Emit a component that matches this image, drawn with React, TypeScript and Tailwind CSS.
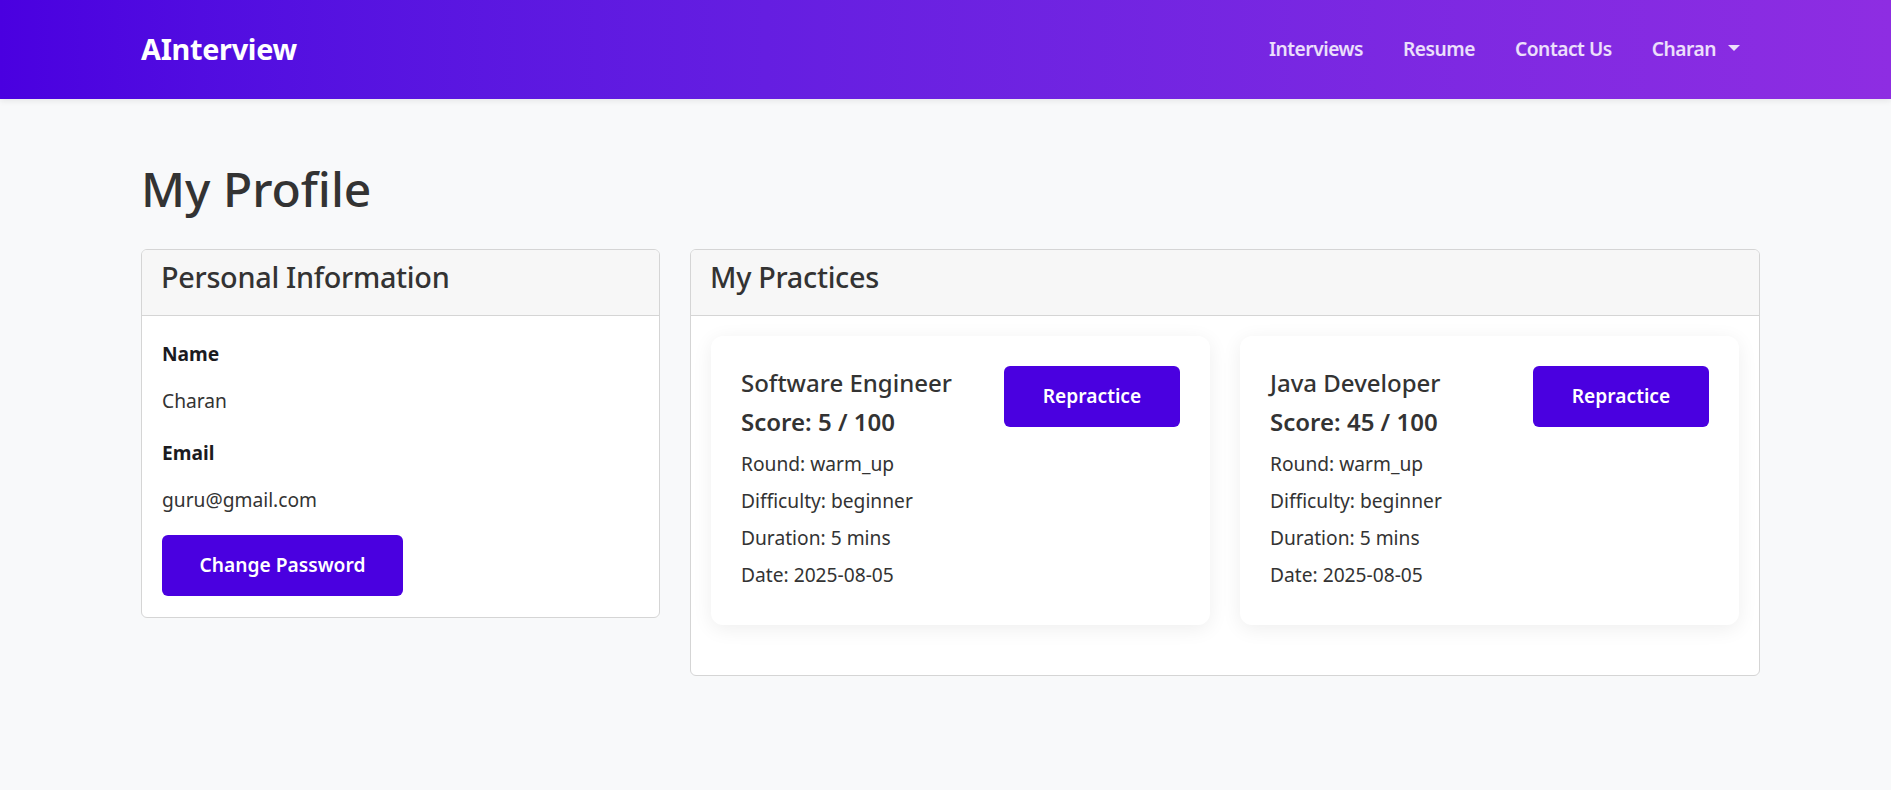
const practices = [
  { id: 1, role: "Software Engineer", score: 5, round: "warm_up", difficulty: "beginner", duration: 5, date: "2025-08-05" },
  { id: 2, role: "Java Developer", score: 45, round: "warm_up", difficulty: "beginner", duration: 5, date: "2025-08-05" },
];

function Navbar() {
  return (
    <nav className="h-[99px] bg-gradient-to-r from-[#4a00e0] to-[#8e2de2] shadow-[0_2px_6px_rgba(0,0,0,0.08)]">
      <div className="flex h-full items-center pl-[141px] pr-[131px]">
        <a href="#" className="text-[28.8px] font-bold leading-none tracking-[-0.01em] text-white">
          AInterview
        </a>
        <ul className="ml-auto flex items-center text-[19.2px] font-semibold tracking-[-0.025em] text-white/85">
          <li><a href="#" className="block px-[20px]">Interviews</a></li>
          <li><a href="#" className="block px-[20px]">Resume</a></li>
          <li><a href="#" className="block px-[20px]">Contact Us</a></li>
          <li>
            <a href="#" className="flex items-center px-[20px]">
              Charan
              {/* dropdown caret */}
              <span className="mb-[3px] ml-[12px] inline-block h-0 w-0 border-x-[6px] border-t-[6px] border-x-transparent border-t-white/85" />
            </a>
          </li>
        </ul>
      </div>
    </nav>
  );
}

function CardHeader({ title }: { title: string }) {
  return (
    <div className="border-b border-[#d5d5d5] bg-[#f7f7f7] px-[19px] pt-[10px] pb-[21px]">
      <h4 className="text-[28.8px] font-medium leading-[34.5px] tracking-[-0.01em] text-[#333]">{title}</h4>
    </div>
  );
}

function PracticeCard({ p }: { p: (typeof practices)[number] }) {
  return (
    <div className="mb-[30px] flex justify-between rounded-[12px] bg-white px-[30px] pt-[30px] pb-[28px] shadow-[0_4px_20px_rgba(0,0,0,0.07)]">
      <div className="text-[#333]">
        <h5 className="mt-[2px] mb-[10px] text-[24px] font-medium leading-[29px]">{p.role}</h5>
        <h5 className="mb-[13px] text-[24px] font-semibold leading-[29px]">
          Score: {p.score} / 100
        </h5>
        <p className="mb-[8px] leading-[29px]">Round: {p.round}</p>
        <p className="mb-[8px] leading-[29px]">Difficulty: {p.difficulty}</p>
        <p className="mb-[8px] leading-[29px]">Duration: {p.duration} mins</p>
        <p className="mb-[8px] leading-[29px]">Date: {p.date}</p>
      </div>
      <div>
        <button className="h-[61px] w-[176px] rounded-[6px] bg-[#4a00e0] font-semibold text-white">
          Repractice
        </button>
      </div>
    </div>
  );
}

export default function App() {
  return (
    <div className="min-h-[790px] bg-[#f8f9fa] text-[19.2px] text-[#333] [font-family:'Noto_Sans','Open_Sans',sans-serif]">
      <Navbar />

      <main className="pl-[141px] pr-[131px] pt-[61px]">
        <h1 className="mb-[31px] text-[48px] font-medium leading-[57.6px] text-[#333]">My Profile</h1>

        <div className="grid grid-cols-[519px_1fr] items-start gap-[30px]">
          {/* Personal Information */}
          <div className="overflow-hidden rounded-[6px] border border-[#d5d5d5] bg-white">
            <CardHeader title="Personal Information" />
            <div className="px-[20px] pt-[23px] pb-[21px]">
              <p className="mb-[18px] font-bold leading-[29px] text-[#1b1b1f]">Name</p>
              <p className="mb-[23px] leading-[29px]">Charan</p>
              <p className="mb-[18px] font-bold leading-[29px] text-[#1b1b1f]">Email</p>
              <p className="mb-[21px] leading-[29px]">guru@gmail.com</p>
              <button className="h-[61px] w-[241px] rounded-[6px] bg-[#4a00e0] font-semibold text-white">
                Change Password
              </button>
            </div>
          </div>

          {/* My Practices */}
          <div className="overflow-hidden rounded-[6px] border border-[#d5d5d5] bg-white">
            <CardHeader title="My Practices" />
            <div className="grid grid-cols-2 gap-x-[30px] px-[20px] pt-[20px] pb-[20px]">
              {practices.map((p) => (
                <PracticeCard key={p.id} p={p} />
              ))}
            </div>
          </div>
        </div>
      </main>
    </div>
  );
}
